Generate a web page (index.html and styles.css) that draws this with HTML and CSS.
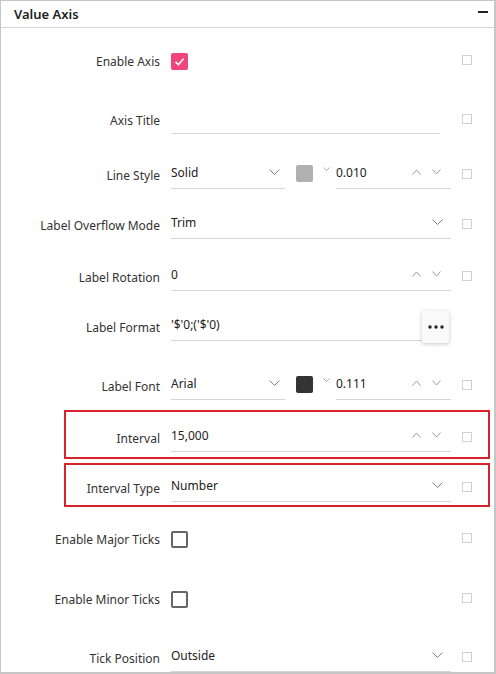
FILE: index.html
```html
<!DOCTYPE html>
<html lang="en">
<head>
    <meta charset="UTF-8">
    <meta name="viewport" content="width=device-width, initial-scale=1.0">
    <title>Value Axis</title>
    <link rel="stylesheet" href="styles.css">
</head>
<body>
    <div class="panel">
        <div class="panel-header">
            <span class="panel-title">Value Axis</span>
            <span class="collapse"></span>
        </div>

        <div class="row gap-first">
            <span class="row-label">Enable Axis</span>
            <div class="row-field">
                <span class="check checked">
                    <svg viewBox="0 0 17 17"><path d="M4.5 8.8 L7.4 11.6 L12.6 5.8"/></svg>
                </span>
            </div>
            <span class="reset"></span>
        </div>

        <div class="row gap-xl">
            <span class="row-label">Axis Title</span>
            <div class="row-field">
                <div class="input short"></div>
            </div>
            <span class="reset"></span>
        </div>

        <div class="row gap-l">
            <span class="row-label">Line Style</span>
            <div class="row-field">
                <div class="input select-sm">
                    <span class="value">Solid</span>
                    <svg class="chev" viewBox="0 0 11 6"><path d="M0.5 0.5 L5.5 5.5 L10.5 0.5"/></svg>
                </div>
                <span class="swatch light"></span>
                <svg class="chev-tiny" viewBox="0 0 7 4"><path d="M0.5 0.5 L3.5 3.5 L6.5 0.5"/></svg>
                <div class="input number">
                    <span class="value">0.010</span>
                    <span class="spin">
                        <svg class="chev" viewBox="0 0 9 6"><path d="M0.5 5.5 L4.5 1 L8.5 5.5"/></svg>
                        <svg class="chev" viewBox="0 0 9 6"><path d="M0.5 0.5 L4.5 5 L8.5 0.5"/></svg>
                    </span>
                </div>
            </div>
            <span class="reset"></span>
        </div>

        <div class="row gap-s">
            <span class="row-label">Label Overflow Mode</span>
            <div class="row-field">
                <div class="input">
                    <span class="value">Trim</span>
                    <svg class="chev" viewBox="0 0 11 6"><path d="M0.5 0.5 L5.5 5.5 L10.5 0.5"/></svg>
                </div>
            </div>
            <span class="reset"></span>
        </div>

        <div class="row gap-m">
            <span class="row-label">Label Rotation</span>
            <div class="row-field">
                <div class="input number">
                    <span class="value">0</span>
                    <span class="spin">
                        <svg class="chev" viewBox="0 0 9 6"><path d="M0.5 5.5 L4.5 1 L8.5 5.5"/></svg>
                        <svg class="chev" viewBox="0 0 9 6"><path d="M0.5 0.5 L4.5 5 L8.5 0.5"/></svg>
                    </span>
                </div>
            </div>
            <span class="reset"></span>
        </div>

        <div class="row gap-s">
            <span class="row-label">Label Format</span>
            <div class="row-field">
                <div class="input">
                    <span class="value">'$'0;('$'0)</span>
                </div>
                <button class="more">
                    <svg viewBox="0 0 16 4"><circle cx="2" cy="2" r="1.7"/><circle cx="8" cy="2" r="1.7"/><circle cx="14" cy="2" r="1.7"/></svg>
                </button>
            </div>
        </div>

        <div class="row gap-xl">
            <span class="row-label">Label Font</span>
            <div class="row-field">
                <div class="input select-sm">
                    <span class="value">Arial</span>
                    <svg class="chev" viewBox="0 0 11 6"><path d="M0.5 0.5 L5.5 5.5 L10.5 0.5"/></svg>
                </div>
                <span class="swatch dark"></span>
                <svg class="chev-tiny" viewBox="0 0 7 4"><path d="M0.5 0.5 L3.5 3.5 L6.5 0.5"/></svg>
                <div class="input number">
                    <span class="value">0.111</span>
                    <span class="spin">
                        <svg class="chev" viewBox="0 0 9 6"><path d="M0.5 5.5 L4.5 1 L8.5 5.5"/></svg>
                        <svg class="chev" viewBox="0 0 9 6"><path d="M0.5 0.5 L4.5 5 L8.5 0.5"/></svg>
                    </span>
                </div>
            </div>
            <span class="reset"></span>
        </div>

        <div class="row gap-m highlight">
            <span class="row-label">Interval</span>
            <div class="row-field">
                <div class="input number">
                    <span class="value">15,000</span>
                    <span class="spin">
                        <svg class="chev" viewBox="0 0 9 6"><path d="M0.5 5.5 L4.5 1 L8.5 5.5"/></svg>
                        <svg class="chev" viewBox="0 0 9 6"><path d="M0.5 0.5 L4.5 5 L8.5 0.5"/></svg>
                    </span>
                </div>
            </div>
            <span class="reset"></span>
        </div>

        <div class="row gap-s highlight">
            <span class="row-label">Interval Type</span>
            <div class="row-field">
                <div class="input">
                    <span class="value">Number</span>
                    <svg class="chev" viewBox="0 0 11 6"><path d="M0.5 0.5 L5.5 5.5 L10.5 0.5"/></svg>
                </div>
            </div>
            <span class="reset"></span>
        </div>

        <div class="row gap-s2">
            <span class="row-label">Enable Major Ticks</span>
            <div class="row-field">
                <span class="check"></span>
            </div>
            <span class="reset"></span>
        </div>

        <div class="row gap-xxl">
            <span class="row-label">Enable Minor Ticks</span>
            <div class="row-field">
                <span class="check"></span>
            </div>
            <span class="reset"></span>
        </div>

        <div class="row gap-xl">
            <span class="row-label">Tick Position</span>
            <div class="row-field">
                <div class="input">
                    <span class="value">Outside</span>
                    <svg class="chev" viewBox="0 0 11 6"><path d="M0.5 0.5 L5.5 5.5 L10.5 0.5"/></svg>
                </div>
            </div>
            <span class="reset"></span>
        </div>
    </div>
</body>
</html>
```

FILE: styles.css
```css
* {
    box-sizing: border-box;
}
body {
    margin: 0;
    font-family: "Noto Sans", "Open Sans", sans-serif;
    font-size: 12px;
    color: #333;
    background: #fff;
}
.panel {
    width: 496px;
    height: 674px;
    border: 1px solid #c6c6c6;
    border-right-width: 2px;
    border-bottom-width: 2px;
    overflow: hidden;
}
.panel-header {
    height: 27px;
    border-bottom: 1px solid #d4d4d4;
    display: flex;
    align-items: center;
    justify-content: space-between;
    padding: 0 6px 0 13px;
}
.panel-title {
    font-size: 13px;
    font-weight: 600;
    color: #222;
}
.collapse {
    width: 10px;
    height: 2px;
    background: #222;
    margin-top: -4px;
}

/* rows */
.row {
    position: relative;
    height: 40px;
    display: grid;
    grid-template-columns: 159px 1fr 10px;
    column-gap: 11px;
    align-items: center;
    padding-right: 22px;
}
.gap-first { margin-top: 13px; }
.gap-s { margin-top: 10px; }
.gap-s2 { margin-top: 11px; }
.gap-m { margin-top: 12px; }
.gap-l { margin-top: 15px; }
.gap-xl { margin-top: 19px; }
.gap-xxl { margin-top: 20px; }

.row-label {
    text-align: right;
    white-space: nowrap;
    color: #333;
}
.row-field {
    display: flex;
    align-items: center;
    min-width: 0;
}
.reset {
    width: 10px;
    height: 10px;
    border: 1px solid #d0d0d0;
    margin-top: -2px;
}
.highlight::after {
    content: "";
    position: absolute;
    left: 63px;
    right: 4px;
    top: -8px;
    bottom: -1px;
    border: 2px solid #d8212b;
    pointer-events: none;
}
.highlight + .highlight::after {
    top: -5px;
    bottom: 1px;
}

/* inputs */
.input {
    flex: 1;
    height: 28px;
    display: flex;
    align-items: center;
    padding-bottom: 5px;
    border-bottom: 1px solid #d6d6d6;
    color: #222;
    min-width: 0;
}
.input .value {
    flex: 1;
    white-space: nowrap;
}
.input.short {
    margin-right: 11px;
}
.input.select-sm {
    flex: 0 0 114px;
}
.input .chev {
    width: 11px;
    height: 6px;
    margin-right: 8px;
}
.select-sm .chev {
    margin-right: 5px;
}
.chev path,
.chev-tiny path {
    fill: none;
    stroke: #808080;
    stroke-width: 1;
}
.spin {
    display: flex;
    gap: 11px;
    margin-right: 10px;
}
.spin .chev {
    width: 9px;
    height: 6px;
    margin-right: 0;
}
.spin .chev path {
    stroke: #9a9a9a;
}
.swatch {
    width: 17px;
    height: 17px;
    border-radius: 2px;
    margin: 0 10px 4px 11px;
}
.swatch.light { background: #b0b0b0; }
.swatch.dark { background: #333; }
.chev-tiny {
    width: 7px;
    height: 4px;
    margin: 0 6px 12px 0;
}
.chev-tiny path {
    stroke: #aaa;
}

.more {
    width: 27px;
    height: 32px;
    border: none;
    border-radius: 2px;
    background: #fafafa;
    box-shadow: 0 1px 4px rgba(0, 0, 0, 0.22);
    display: flex;
    align-items: center;
    justify-content: center;
    padding: 0;
    margin-right: 2px;
}
.more svg {
    width: 16px;
    height: 4px;
    fill: #222;
}

/* checkboxes */
.check {
    width: 17px;
    height: 17px;
    border: 2px solid #666;
    border-radius: 2px;
    display: flex;
}
.check.checked {
    border: none;
    background: #f0457b;
}
.check svg {
    width: 17px;
    height: 17px;
}
.check svg path {
    fill: none;
    stroke: #fff;
    stroke-width: 1.6;
}
```
